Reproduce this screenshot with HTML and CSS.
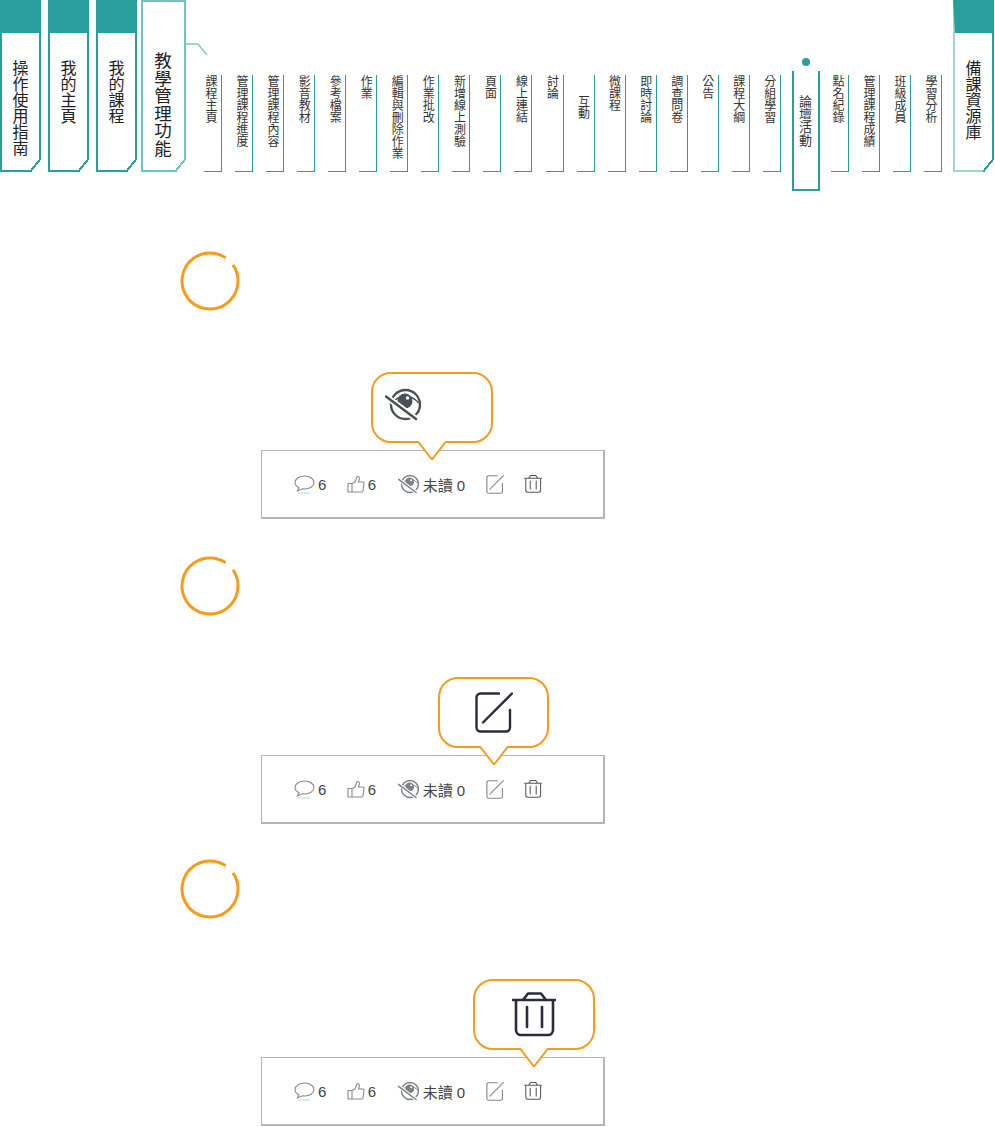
FILE: index.html
```html
<!DOCTYPE html>
<html lang="zh-Hant">
<head>
    <meta charset="UTF-8">
    <meta name="viewport" content="width=device-width, initial-scale=1.0">
    <title>論壇活動</title>
    <link rel="stylesheet" href="styles.css">
</head>
<body>
    <svg class="sprite" xmlns="http://www.w3.org/2000/svg">
        <symbol id="icon-edit" viewBox="0 0 38 41">
            <path d="M24 1.5H5.5a4 4 0 0 0-4 4V35.5a4 4 0 0 0 4 4H31a4 4 0 0 0 4-4V18" fill="none" stroke="currentColor" stroke-width="2.4" stroke-linecap="round"/>
            <path d="M8 30.5L37 1.5" fill="none" stroke="currentColor" stroke-width="2.4" stroke-linecap="round"/>
        </symbol>
        <symbol id="icon-trash" viewBox="0 0 44 45">
            <path d="M1 8H43M11 8L16 1.5H29L34 8" fill="none" stroke="currentColor" stroke-width="2.6" stroke-linecap="round" stroke-linejoin="round"/>
            <path d="M4 9V38a5 5 0 0 0 5 5H36a5 5 0 0 0 5-5V9" fill="none" stroke="currentColor" stroke-width="2.6"/>
            <path d="M15 15V35M30 15V35" fill="none" stroke="currentColor" stroke-width="2.6" stroke-linecap="round"/>
        </symbol>
        <symbol id="icon-eye" viewBox="0 0 36 33">
            <circle cx="20.5" cy="16.5" r="14.5" fill="none" stroke="currentColor" stroke-width="2.4"/>
            <path d="M7 15Q20 1 34 15" fill="none" stroke="currentColor" stroke-width="1.6"/>
            <circle cx="20" cy="13" r="7.5" fill="currentColor"/>
            <circle cx="22.5" cy="10" r="1.7" fill="#fff"/>
            <path d="M1 8.5L31 31" fill="none" stroke="#fff" stroke-width="6"/>
            <path d="M1 8.5L31 31" fill="none" stroke="currentColor" stroke-width="2.5" stroke-linecap="round"/>
        </symbol>
        <symbol id="icon-comment" viewBox="0 0 21 19">
            <path class="thin" d="M10.5 1C5 1 1 4 1 7.5C1 9.8 2.500 11.500 5 12.800L3.500 16L8.500 13.800C9.200 13.900 9.800 14 10.500 14C16 14 20 11 20 7.500C20 4 16 1 10.500 1Z"/>
            <path class="tint" d="M4 18H16"/>
        </symbol>
        <symbol id="icon-thumb" viewBox="0 0 18 18">
            <path class="thin" d="M1 8.500H5V17H1ZM5 8.500L8 7L10 1.800C11.500 1 12.800 2 12.300 4L11.500 7H16C16.800 7 17.200 7.600 17 8.300L16 16C15.900 16.600 15.500 17 15 17H5"/>
        </symbol>
        <symbol id="icon-tip" viewBox="0 0 32 19">
            <path d="M1.5 0L16 18.500L30.500 0"/>
        </symbol>
    </svg>

    <header class="nav">
        <a class="tab">操作使用指南</a>
        <a class="tab">我的主頁</a>
        <a class="tab">我的課程</a>
        <a class="tab tab-open">教學管理功能
            <svg class="tab-link" width="24" height="14" viewBox="0 0 24 14"><path d="M0 1H14L23 12" fill="none" stroke="#7cc9c6" stroke-width="1.5"/></svg>
        </a>
        <ul class="subnav">
            <li class="sub">課程主頁</li>
            <li class="sub">管理課程進度</li>
            <li class="sub">管理課程內容</li>
            <li class="sub">影音教材</li>
            <li class="sub">參考檔案</li>
            <li class="sub">作業</li>
            <li class="sub">編輯與刪除作業</li>
            <li class="sub">作業批改</li>
            <li class="sub">新增線上測驗</li>
            <li class="sub">頁面</li>
            <li class="sub">線上連結</li>
            <li class="sub">討論</li>
            <li class="sub sub-low">互動</li>
            <li class="sub">微課程</li>
            <li class="sub">即時討論</li>
            <li class="sub">調查問卷</li>
            <li class="sub">公告</li>
            <li class="sub">課程大綱</li>
            <li class="sub">分組學習</li>
            <li class="sub sub-active">論壇活動</li>
            <li class="sub">點名紀錄</li>
            <li class="sub">管理課程成績</li>
            <li class="sub">班級成員</li>
            <li class="sub">學習分析</li>
        </ul>
        <a class="tab tab-right">備課資源庫</a>
    </header>

    <main class="content">
        <section class="step">
            <svg class="ring" width="60" height="60" viewBox="0 0 60 60"><circle cx="30" cy="30" r="28" pathLength="360" stroke-dasharray="339 21" transform="rotate(-35 30 30)"/></svg>
            <div class="toolbar">
                <div class="bubble bubble-eye">
                    <svg class="big-eye"><use href="#icon-eye"/></svg>
                    <svg class="tip"><use href="#icon-tip"/></svg>
                </div>
                <span class="stat"><svg class="small-comment"><use href="#icon-comment"/></svg>6</span>
                <span class="stat"><svg class="small-thumb"><use href="#icon-thumb"/></svg>6</span>
                <span class="stat stat-wide"><svg class="small-eye"><use href="#icon-eye"/></svg>未讀 0</span>
                <svg class="small-edit"><use href="#icon-edit"/></svg>
                <svg class="small-trash"><use href="#icon-trash"/></svg>
            </div>
        </section>

        <section class="step step-edit">
            <svg class="ring" width="60" height="60" viewBox="0 0 60 60"><circle cx="30" cy="30" r="28" pathLength="360" stroke-dasharray="339 21" transform="rotate(-35 30 30)"/></svg>
            <div class="toolbar">
                <div class="bubble bubble-edit">
                    <svg class="big-edit"><use href="#icon-edit"/></svg>
                    <svg class="tip"><use href="#icon-tip"/></svg>
                </div>
                <span class="stat"><svg class="small-comment"><use href="#icon-comment"/></svg>6</span>
                <span class="stat"><svg class="small-thumb"><use href="#icon-thumb"/></svg>6</span>
                <span class="stat stat-wide"><svg class="small-eye"><use href="#icon-eye"/></svg>未讀 0</span>
                <svg class="small-edit"><use href="#icon-edit"/></svg>
                <svg class="small-trash"><use href="#icon-trash"/></svg>
            </div>
        </section>

        <section class="step step-trash">
            <svg class="ring" width="60" height="60" viewBox="0 0 60 60"><circle cx="30" cy="30" r="28" pathLength="360" stroke-dasharray="339 21" transform="rotate(-35 30 30)"/></svg>
            <div class="toolbar">
                <div class="bubble bubble-trash">
                    <svg class="big-trash"><use href="#icon-trash"/></svg>
                    <svg class="tip"><use href="#icon-tip"/></svg>
                </div>
                <span class="stat"><svg class="small-comment"><use href="#icon-comment"/></svg>6</span>
                <span class="stat"><svg class="small-thumb"><use href="#icon-thumb"/></svg>6</span>
                <span class="stat stat-wide"><svg class="small-eye"><use href="#icon-eye"/></svg>未讀 0</span>
                <svg class="small-edit"><use href="#icon-edit"/></svg>
                <svg class="small-trash"><use href="#icon-trash"/></svg>
            </div>
        </section>
    </main>
</body>
</html>
```

FILE: styles.css
```css
body {
    font-family: "Liberation Sans", "Noto Sans CJK TC", sans-serif;
    background-color: #fff;
    color: #222;
    margin: 0;
}
.sprite {
    display: none;
}

/* top navigation */
.nav {
    display: flex;
    align-items: flex-start;
    gap: 7px;
    padding-right: 1px;
}
.tab {
    position: relative;
    box-sizing: border-box;
    flex: none;
    width: 41px;
    height: 172px;
    padding: 27px 4px 0 0;
    border: 2px solid #289f9c;
    border-top: 33px solid #289f9c;
    display: flex;
    writing-mode: vertical-rl;
    justify-content: flex-start;
    align-items: center;
    font-size: 16px;
    line-height: 18px;
}
.tab::after {
    content: "";
    position: absolute;
    right: -2px;
    bottom: -2px;
    width: 11px;
    height: 14px;
    background: linear-gradient(to bottom right, transparent calc(50% - 1px), #289f9c calc(50% - 1px), #289f9c calc(50% + 1px), #fff calc(50% + 1px));
}
.tab-open {
    width: 45px;
    margin-left: -3px;
    padding-top: 50px;
    border: 2px solid #6fc3c0;
    font-size: 17.5px;
    line-height: 20px;
}
.tab-open::after {
    background: linear-gradient(to bottom right, transparent calc(50% - 1px), #6fc3c0 calc(50% - 1px), #6fc3c0 calc(50% + 1px), #fff calc(50% + 1px));
}
.tab-link {
    position: absolute;
    left: 100%;
    top: 41px;
}
.tab-right {
    margin-left: auto;
    border-color: #9bd6d3;
    border-top-color: #289f9c;
    border-right-color: #289f9c;
}
.subnav {
    display: flex;
    align-items: flex-start;
    gap: 13.06px;
    list-style: none;
    margin: 75px 0 0 11px;
    padding: 0;
}
.sub {
    box-sizing: border-box;
    width: 18px;
    height: 97px;
    padding-right: 5px;
    border-right: 1px solid #289f9c;
    border-bottom: 1px solid #289f9c;
    writing-mode: vertical-rl;
    color: #333;
    font-size: 12px;
    line-height: 12px;
}
.sub-low {
    padding-top: 20px;
}
.sub-active {
    position: relative;
    width: 28px;
    height: 120px;
    margin: -4px -2px 0;
    padding: 24px 7px 0 0;
    border: 2px solid #289f9c;
    border-top: 0;
    font-size: 13px;
    line-height: 13px;
}
.sub-active::before {
    content: "";
    position: absolute;
    top: -13px;
    left: 8px;
    width: 8px;
    height: 8px;
    border-radius: 50%;
    background: #289f9c;
}

/* forum steps */
.content {
    padding: 60px 0 0 180px;
}
.step-edit {
    margin-top: 37px;
}
.step-trash {
    margin-top: 35px;
}
.ring {
    display: block;
}
.ring circle {
    fill: none;
    stroke: #f59c1f;
    stroke-width: 3;
}
.toolbar {
    position: relative;
    box-sizing: border-box;
    width: 344px;
    height: 69px;
    margin: 139px 0 0 81px;
    padding-left: 32px;
    border: 1px solid #b5b5b5;
    border-right-width: 2px;
    border-bottom-width: 2px;
    display: flex;
    align-items: center;
    gap: 20.5px;
    color: #444;
    font-size: 15px;
}
.step-trash .toolbar {
    margin-top: 138px;
}
.stat {
    display: flex;
    align-items: center;
    gap: 3px;
}
.stat-wide {
    gap: 4px;
    margin-left: 1px;
}
.thin {
    fill: none;
    stroke: #8a8a8a;
    stroke-width: 1.1;
}
.tint {
    fill: none;
    stroke: #a5dedb;
    stroke-width: 1;
}
.small-comment {
    width: 21px;
    height: 19px;
}
.small-thumb {
    width: 18px;
    height: 18px;
}
.small-eye {
    width: 21px;
    height: 20px;
    color: #7c8083;
}
.small-edit {
    width: 18px;
    height: 19px;
    color: #858585;
}
.small-trash {
    width: 18px;
    height: 18px;
    color: #555;
}

/* orange callouts */
.bubble {
    position: absolute;
    bottom: calc(100% + 8px);
    box-sizing: border-box;
    height: 71px;
    border: 2px solid #f59c1f;
    border-radius: 20px;
    background: #fff;
    display: flex;
    justify-content: center;
    align-items: center;
}
.bubble-eye {
    left: 109px;
    width: 122px;
    justify-content: flex-start;
    align-items: flex-start;
    padding: 14px 0 0 12px;
}
.bubble-edit {
    left: 176px;
    width: 111px;
}
.bubble-trash {
    left: 211px;
    width: 122px;
}
.big-eye {
    width: 36px;
    height: 33px;
    color: #4a5156;
}
.big-edit {
    width: 38px;
    height: 41px;
    color: #2a2c3c;
}
.big-trash {
    width: 44px;
    height: 45px;
    color: #2a2c3c;
}
.tip {
    position: absolute;
    top: 100%;
    left: 50%;
    width: 32px;
    height: 19px;
    transform: translateX(-50%);
    overflow: visible;
    fill: #fff;
    stroke: #f59c1f;
    stroke-width: 2;
}
```
